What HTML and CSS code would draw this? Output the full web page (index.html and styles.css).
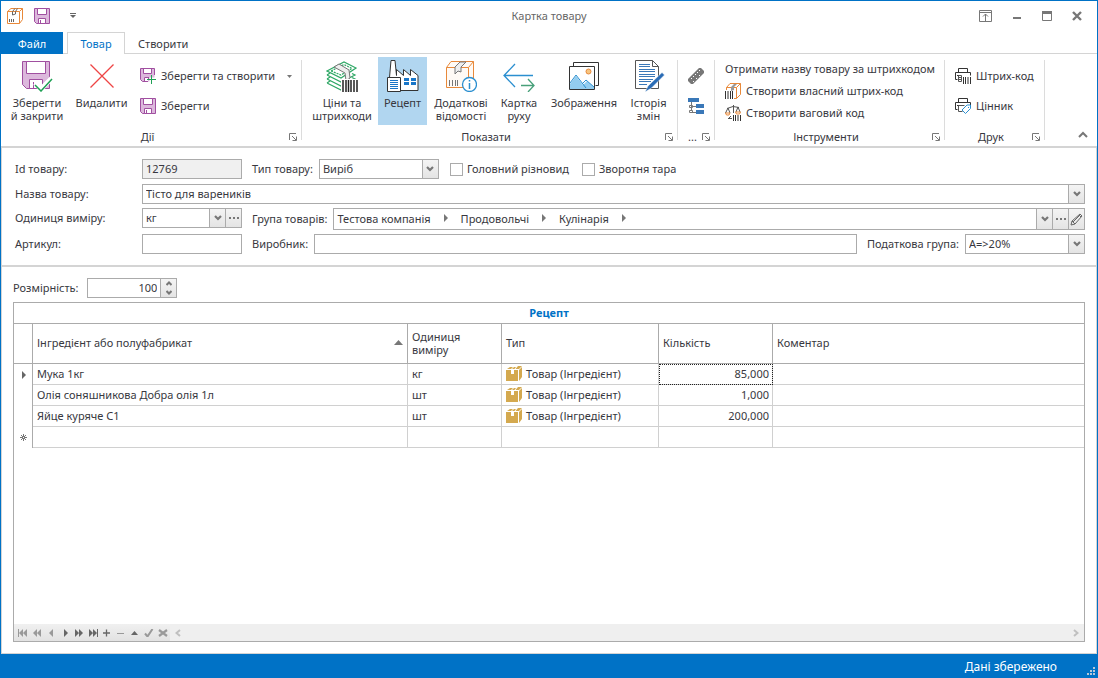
FILE: index.html
```html
<!DOCTYPE html>
<html lang="uk">
<head>
<meta charset="utf-8">
<title>Картка товару</title>
<link rel="stylesheet" href="styles.css">
</head>
<body>
<svg class="defs" aria-hidden="true">
  <symbol id="save" viewBox="0 0 16 16"><path d="M.5.5h15v15h-13l-2-2z" fill="#dcb8dc" stroke="#a04fa0"/><path d="M3.5.5h9v6h-9z" fill="#fff" stroke="#a04fa0"/><path d="M4.500 15.500v-5h7v5z" fill="#fff" stroke="#a04fa0"/><path d="M6.500 12v3" stroke="#a04fa0"/></symbol>
  <symbol id="chev" viewBox="0 0 8 6"><path d="M1 1l3 3 3-3" fill="none" stroke="#777" stroke-width="2.200"/></symbol>
  <symbol id="launch" viewBox="0 0 8 8"><path d="M.5 7V.5H7M3 3l4 4M7.500 3.500v4h-4" fill="none" stroke="#777"/></symbol>
  <symbol id="right" viewBox="0 0 4 8"><path d="M0 0l4 4-4 4z" fill="currentColor"/></symbol>
  <symbol id="goods" viewBox="0 -1 16 16"><path d="M0 4h12v11H0zM1 3l3-2h3L5 3zM6 3l2-2h2L8.500 3zM9.500 3L12 0h4l-3 3zM13 4l3-3v10l-3 4z" fill="#d4a94f"/><path d="M5 4h3v4H5z" fill="#fff"/></symbol>
  <symbol id="printer" viewBox="0 0 16 16"><path d="M3.500 5V.5h9V5M2.500 11.500h-2v-7h15v3M2 7.500h3" fill="none" stroke="#333"/></symbol>
</svg>
<div class="window">
  <header class="titlebar">
    <div class="quick">
      <svg class="i16" viewBox="0 0 16 16"><path d="M.5 3.500L4 .5h11.500v11l-3 4H.5zM.5 3.500h12v12M12.500 3.500l3-3" fill="none" stroke="#e8893a"/><path d="M5.500 7V3.500L8 .5M8.500 6V3.500L10.500.5M5.500 7l3-1M2.500 11v3M4.500 11v3M6.500 11v3" fill="none" stroke="#666"/></svg>
      <button class="plain" aria-label="Зберегти"><svg class="i16"><use href="#save"/></svg></button>
      <button class="plain more" aria-label="Налаштувати"><svg width="6" height="6" viewBox="0 0 6 6"><path d="M0 .5h6" stroke="#666"/><path d="M0 2h6L3 5z" fill="#666"/></svg></button>
    </div>
    <h1>Картка товару</h1>
    <div class="wincontrols">
      <button class="plain" aria-label="Стрічка"><svg width="13" height="12" viewBox="0 0 13 12"><path d="M.5.5h12v11H.5zM0 2.500h13M6.500 4v8M4 6.500L6.500 4 9 6.500" fill="none" stroke="#777"/></svg></button>
      <button class="plain" aria-label="Згорнути"><svg width="10" height="12" viewBox="0 0 10 12"><path d="M1 8h8" stroke="#777" stroke-width="2"/></svg></button>
      <button class="plain" aria-label="Розгорнути"><svg width="10" height="10" viewBox="0 0 10 10"><path d="M.5.5h9v9h-9z" fill="none" stroke="#777"/><path d="M0 0h10v3H0z" fill="#777"/></svg></button>
      <button class="plain" aria-label="Закрити"><svg width="10" height="10" viewBox="0 0 10 10"><path d="M1 1l8 8M9 1L1 9" stroke="#777" stroke-width="2.400"/></svg></button>
    </div>
  </header>
  <nav class="tabs">
    <button class="tab file">Файл</button>
    <button class="tab active">Товар</button>
    <button class="tab">Створити</button>
  </nav>
  <div class="ribbon">
    <section class="group actions">
      <div class="tools">
        <button class="big saveclose"><svg class="i32" viewBox="0 0 32 32"><path d="M1.500 1.500h27v27h-23l-4-4z" fill="#dcb8dc" stroke="#a04fa0"/><path d="M5.500 1.500h19v12h-19z" fill="#fff" stroke="#a04fa0"/><path d="M8.500 28.500v-9h13v9z" fill="#fff" stroke="#a04fa0"/><path d="M12.500 22v6" stroke="#a04fa0"/><path d="M14 23l6 6L31 18" fill="none" stroke="#fff" stroke-width="5"/><path d="M14 25l6 6L31 19" fill="none" stroke="#1fa055" stroke-width="1.500"/></svg><span>Зберегти<br>й закрити</span></button>
        <button class="big delete"><svg class="i32" viewBox="0 0 32 32"><path d="M4.500 4.500l23 23M27.500 4.500l-23 23" stroke="#ee4545" stroke-width="1.300"/></svg><span>Видалити</span></button>
        <div class="stack two">
          <button class="small"><svg class="i16" viewBox="0 0 16 16"><path d="M.5.5h14v9h-5v4h-7l-2-2z" fill="#dcb8dc"/><path d="M14.500 7V.5H.5v11l2 2H8M3.500.5v5h8v-5" fill="none" stroke="#a04fa0"/><path d="M4 1h7v4H4zM4 9h4v4H4z" fill="#fff"/><path d="M4.500 13V9.500H8M8.500 9v2" fill="none" stroke="#a04fa0"/><path d="M11.500 7v9M7 11.500h9" stroke="#1fa055"/></svg><span>Зберегти та створити</span><svg class="drop" width="5" height="3" viewBox="0 0 5 3"><path d="M0 0h5L2.500 3z" fill="#777"/></svg></button>
          <button class="small"><svg class="i16"><use href="#save"/></svg><span>Зберегти</span></button>
        </div>
      </div>
      <footer><span>Дії</span><button class="plain launch" aria-label="Дії: більше"><svg width="8" height="8"><use href="#launch"/></svg></button></footer>
    </section>
    <section class="group show">
      <div class="tools">
        <button class="big prices"><svg class="i32" viewBox="0 0 32 32"><g fill="#fff" stroke="#2fa866" stroke-width="1.200"><path d="M1 23l3-2M1 23l14 7 3-2M1 19l3-2M1 19l14 7 14-7-3-1.500M1 15l3-2M1 15l14 7 14-7-3-1.500"/><path d="M1 11l17-9 12 6-15 10z"/><path d="M5 11l13-6.500 8 4-11 6.500z" stroke-dasharray="2 1"/></g><path d="M8 7l5-3 10 6 1 8-4 3-1-8z" fill="#eee" stroke="#777"/><path d="M15 19h17v13H15z" fill="#fff"/><path d="M17 20v12M20 20v12M22.500 20v12M25 20v12M28 20v12M31 20v12" stroke="#222" stroke-width="1.500"/></svg><span>Ціни та<br>штрихкоди</span></button>
        <button class="big recipe selected"><svg class="i32" viewBox="0 0 32 32"><path d="M2.500 17.500L4 .5h4l1.500 15V9.500l7 6v-6l7 6v-6l7.500 6v15H2.500z" fill="#fff" stroke="#333"/><path d="M.5 17.500h13v14H.5z" fill="#fff" stroke="#333"/><path d="M3 20.500h8M3 22.500h8M3 24.500h8M3 26.500h8M3 28.500h8" stroke="#1976c8"/><path d="M17 18h5v3h-5zM24 18h5v3h-5zM17 22h5v3h-5zM24 22h5v3h-5z" fill="#1976c8"/></svg><span>Рецепт</span></button>
        <button class="big details"><svg class="i32" viewBox="0 0 32 32"><path d="M1.500 7.500L6 1.500h22.500v26h-27zM1.500 7.500h22v20M23.500 7.500l5-6" fill="#fffaf5" stroke="#e8893a"/><path d="M10 14V7l5-5h6l-5 5v5l-3-1z" fill="#eee" stroke="#777"/><path d="M4.500 20v6M7.500 20v6M10.500 20v6M12.500 20v6" stroke="#777"/><circle cx="24.500" cy="24.500" r="7" fill="#fff" stroke="#2b8fd0" stroke-width="1.300"/><path d="M24.500 23v6M24.500 20v1.500" stroke="#2b8fd0" stroke-width="1.500"/></svg><span>Додаткові<br>відомості</span></button>
        <button class="big moves"><svg class="i32" viewBox="0 0 32 32"><path d="M12 4L1 15.500 12 27M1 15.500h29" fill="none" stroke="#2b8fd0" stroke-width="1.300"/><path d="M18 25.500h13M25 19l6 6.500-6 6.500" fill="none" stroke="#48a07a" stroke-width="1.300"/></svg><span>Картка<br>руху</span></button>
        <button class="big images"><svg class="i32" viewBox="0 0 32 32"><path d="M5.500 6V2.500h25v23h-3" fill="none" stroke="#333"/><path d="M1.500 6.500h25v23h-25z" fill="#fff" stroke="#333"/><path d="M2 24l6-8 7 9 4-4 7 6v2H2z" fill="#93cdf0"/><path d="M2 23l6-8 10 13M14 24l4-4 8 7" fill="none" stroke="#2b8fd0"/><circle cx="20.500" cy="11.500" r="2.500" fill="#f6c580" stroke="#e8893a"/></svg><span>Зображення</span></button>
        <button class="big history"><svg class="i32" viewBox="0 0 32 32"><path d="M2.500.5h17l6 6v22h-23zM19.500.5v6h6" fill="#fff" stroke="#555"/><path d="M6 4.500h11M6 6.500h11M6 9.500h16M6 11.500h16M6 14.500h16M6 16.500h16M6 19.500h14M6 21.500h12M6 24.500h8" stroke="#3a78b8"/><path d="M12 32l3-6L29 12.500l2.500 2.500-13 13z" fill="#2a6cb5" stroke="#fff" stroke-width=".5"/></svg><span>Історія<br>змін</span></button>
      </div>
      <footer><span>Показати</span><button class="plain launch" aria-label="Показати: більше"><svg width="8" height="8"><use href="#launch"/></svg></button></footer>
    </section>
    <section class="group extra">
      <div class="tools stack two">
        <button class="small" aria-label="Лінійка"><svg class="i16" viewBox="0 0 16 16"><path d="M0 11L11 0h2l3 3v2L5 16H3l-3-3z" fill="#777"/><path d="M3 10l1 1M5 8l1 1M7 6l1 1M9 4l1 1M11 2l1 1M5 13l1 1M8 10l1 1M11 7l1 1" stroke="#fff"/></svg></button>
        <button class="small" aria-label="Структура"><svg class="i16" viewBox="0 0 16 16"><path d="M0 0h11v4H0zM8 6h8v4H8zM8 12h8v4H8z" fill="#3a78b8"/><path d="M3.500 4v9M4 8.500h4M4 14.500h4M1.500 7.500h3v2h-3zM1.500 12.500h3v2h-3z" fill="#fff" stroke="#777"/></svg></button>
      </div>
      <footer><span>...</span><button class="plain launch" aria-label="Інше: більше"><svg width="8" height="8"><use href="#launch"/></svg></button></footer>
    </section>
    <section class="group instruments">
      <div class="tools stack three">
        <button class="small"><span>Отримати назву товару за штрихкодом</span></button>
        <button class="small"><svg class="i16" viewBox="0 0 16 16"><path d="M1.500 7V4.500L5 .5h10.500v11l-4 4H9M1.500 4.500h10v11M11.500 4.500l4-4" fill="none" stroke="#e8893a"/><path d="M6 8V4l3-3h3L9 4v3z" fill="#999"/><path d="M.5 8v8M3 8v8M5.500 8v8M7.500 8v8" stroke="#333"/></svg><span>Створити власний штрих-код</span></button>
        <button class="small"><svg class="i16" viewBox="0 0 16 16"><path d="M8.500 0v8M2 3.500l6-2 6 1M3 3L.5 8M3 3l2 5M13 2l-2 5M13 2l2 5M3 13.500h4M6 11l-2 2" fill="none" stroke="#555"/><path d="M.5 8h4.500l-1 2H1.500zM10.500 7h5l-1 2h-3z" fill="#fff" stroke="#e8893a"/><path d="M8.500 10v6M10.500 10v6M13 10v6M15.500 10v6" stroke="#333"/></svg><span>Створити ваговий код</span></button>
      </div>
      <footer><span>Інструменти</span><button class="plain launch" aria-label="Інструменти: більше"><svg width="8" height="8"><use href="#launch"/></svg></button></footer>
    </section>
    <section class="group print">
      <div class="tools stack two">
        <button class="small"><svg class="i16" viewBox="0 0 16 16"><use href="#printer"/><path d="M3.500 7.500h3v6h-3zM4 9.500h2M4 11.500h2" fill="none" stroke="#555"/><path d="M8.500 9v7M10.500 9v7M13 9v7M15.500 9v7" stroke="#333"/></svg><span>Штрих-код</span></button>
        <button class="small"><svg class="i16" viewBox="0 0 16 16"><use href="#printer"/><path d="M3.500 7.500h6M3.500 7.500v6h4" fill="none" stroke="#555"/><path d="M7 12l5-5h3.500v3.500l-5 5z" fill="#fff" stroke="#2b8fd0"/><path d="M13 9h1v1h-1z" fill="#2b8fd0"/></svg><span>Цінник</span></button>
      </div>
      <footer><span>Друк</span><button class="plain launch" aria-label="Друк: більше"><svg width="8" height="8"><use href="#launch"/></svg></button></footer>
    </section>
    <button class="plain collapse" aria-label="Згорнути стрічку"><svg width="10" height="7" viewBox="0 0 10 7"><path d="M1 6l4-4 4 4" fill="none" stroke="#777" stroke-width="2"/></svg></button>
  </div>
  <main>
    <form class="card">
      <div class="row">
        <label class="first" for="id">Id товару:</label>
        <input class="box w100 readonly" id="id" value="12769" readonly>
        <label for="type">Тип товару:</label>
        <div class="box combo w120"><select id="type"><option>Виріб</option></select><span class="btn"><svg width="8" height="6"><use href="#chev"/></svg></span></div>
        <label class="check"><input type="checkbox">Головний різновид</label>
        <label class="check"><input type="checkbox">Зворотня тара</label>
      </div>
      <div class="row">
        <label class="first" for="name">Назва товару:</label>
        <div class="box combo grow"><select id="name"><option>Тісто для вареників</option></select><span class="btn"><svg width="8" height="6"><use href="#chev"/></svg></span></div>
      </div>
      <div class="row">
        <label class="first" for="unit">Одиниця виміру:</label>
        <div class="box combo w100"><select id="unit"><option>кг</option></select><span class="btn"><svg width="8" height="6"><use href="#chev"/></svg></span><button type="button" class="btn" aria-label="Вибрати одиницю"><svg width="10" height="2" viewBox="0 0 10 2"><path d="M0 0h2v2H0zM4 0h2v2H4zM8 0h2v2H8z" fill="#777"/></svg></button></div>
        <span class="label">Група товарів:</span>
        <div class="box combo grow tall">
          <div class="crumbs">
            <button type="button" class="plain">Тестова компанія</button><svg width="4" height="8"><use href="#right"/></svg>
            <button type="button" class="plain">Продовольчі</button><svg width="4" height="8"><use href="#right"/></svg>
            <button type="button" class="plain">Кулінарія</button><svg width="4" height="8"><use href="#right"/></svg>
          </div>
          <button type="button" class="btn" aria-label="Відкрити список груп"><svg width="8" height="6"><use href="#chev"/></svg></button>
          <button type="button" class="btn" aria-label="Вибрати групу"><svg width="10" height="2" viewBox="0 0 10 2"><path d="M0 0h2v2H0zM4 0h2v2H4zM8 0h2v2H8z" fill="#777"/></svg></button>
          <button type="button" class="btn" aria-label="Редагувати групу"><svg width="13" height="13" viewBox="0 0 13 13"><path d="M1 12l1-4 8-7 2 2-7 8zM3 9l6-6M2 8l3 3M9 2l2 2" fill="none" stroke="#666"/></svg></button>
        </div>
      </div>
      <div class="row">
        <label class="first" for="sku">Артикул:</label>
        <input class="box w100" id="sku">
        <label for="maker">Виробник:</label>
        <input class="box grow" id="maker">
        <label for="tax">Податкова група:</label>
        <div class="box combo w120"><select id="tax"><option>А=&gt;20%</option></select><span class="btn"><svg width="8" height="6"><use href="#chev"/></svg></span></div>
      </div>
    </form>
    <section class="recipe-pane">
      <div class="size">
        <label for="size">Розмірність:</label>
        <div class="box combo spin"><input id="size" value="100"><span class="updown"><button class="plain" aria-label="Більше"><svg width="6" height="5" viewBox="0 0 6 5"><path d="M.5 4L3 1.500 5.500 4" fill="none" stroke="#777" stroke-width="2"/></svg></button><button class="plain" aria-label="Менше"><svg width="6" height="5" viewBox="0 0 6 5"><path d="M.5 1L3 3.500 5.500 1" fill="none" stroke="#777" stroke-width="2"/></svg></button></span></div>
      </div>
      <div class="grid">
        <table>
          <caption>Рецепт</caption>
          <colgroup><col class="c-mark"><col class="c-name"><col class="c-unit"><col class="c-type"><col class="c-qty"><col></colgroup>
          <thead>
            <tr><th></th><th><div class="sorted">Інгредієнт або полуфабрикат<svg width="9" height="5" viewBox="0 0 9 5"><path d="M0 5h9L4.500 0z" fill="#777"/></svg></div></th><th>Одиниця виміру</th><th>Тип</th><th>Кількість</th><th>Коментар</th></tr>
          </thead>
          <tbody>
            <tr><td><svg width="4" height="8"><use href="#right"/></svg></td><td>Мука 1кг</td><td>кг</td><td><div class="goods"><svg class="i16"><use href="#goods"/></svg>Товар (Інгредієнт)</div></td><td class="num focus">85,000</td><td></td></tr>
            <tr><td></td><td>Олія соняшникова Добра олія 1л</td><td>шт</td><td><div class="goods"><svg class="i16"><use href="#goods"/></svg>Товар (Інгредієнт)</div></td><td class="num">1,000</td><td></td></tr>
            <tr><td></td><td>Яйце куряче С1</td><td>шт</td><td><div class="goods"><svg class="i16"><use href="#goods"/></svg>Товар (Інгредієнт)</div></td><td class="num">200,000</td><td></td></tr>
            <tr><td><svg width="7" height="7" viewBox="0 0 7 7"><path d="M3.500 0v7M0 3.500h7M1 1l5 5M6 1L1 6" stroke="#777"/><path d="M3 3h1v1H3z" fill="#fff"/></svg></td><td></td><td></td><td></td><td></td><td></td></tr>
          </tbody>
        </table>
        <div class="navigator">
          <div class="navbuttons">
            <button class="plain dim" aria-label="Перший"><svg viewBox="0 0 10 8"><path d="M.5 0v8" stroke="currentColor"/><path d="M5 0v8L1 4zM9 0v8L5 4z" fill="currentColor"/></svg></button>
            <button class="plain dim" aria-label="Попередня сторінка"><svg viewBox="0 0 10 8"><path d="M5 0v8L1 4zM9 0v8L5 4z" fill="currentColor"/></svg></button>
            <button class="plain dim" aria-label="Попередній"><svg viewBox="0 0 10 8"><path d="M7 0v8L3 4z" fill="currentColor"/></svg></button>
            <button class="plain" aria-label="Наступний"><svg viewBox="0 0 10 8"><path d="M4 0v8l4-4z" fill="currentColor"/></svg></button>
            <button class="plain" aria-label="Наступна сторінка"><svg viewBox="0 0 10 8"><path d="M1 0v8l4-4zM5 0v8l4-4z" fill="currentColor"/></svg></button>
            <button class="plain" aria-label="Останній"><svg viewBox="0 0 10 8"><path d="M9.500 0v8" stroke="currentColor"/><path d="M1 0v8l4-4zM5 0v8l4-4z" fill="currentColor"/></svg></button>
            <button class="plain" aria-label="Додати"><svg viewBox="0 0 10 8"><path d="M4.500 .5v7M1 4h7" stroke="currentColor" stroke-width="1.300"/></svg></button>
            <button class="plain dim" aria-label="Видалити рядок"><svg viewBox="0 0 10 8"><path d="M1 4.500h7" stroke="currentColor"/></svg></button>
            <button class="plain" aria-label="Редагувати"><svg viewBox="0 0 10 8"><path d="M1 6h7L4.500 2z" fill="currentColor"/></svg></button>
            <button class="plain dim" aria-label="Застосувати"><svg viewBox="0 0 10 8"><path d="M1 4.500l2.500 3L8.500 0" fill="none" stroke="currentColor" stroke-width="2"/></svg></button>
            <button class="plain dim" aria-label="Скасувати"><svg viewBox="0 0 10 8"><path d="M1 1l8 6M9 1l-8 6" stroke="currentColor" stroke-width="2.200"/></svg></button>
          </div>
          <div class="scroll"><svg width="6" height="8" viewBox="0 0 6 8"><path d="M5 1L1.500 4 5 7" fill="none" stroke="#c0c0c0" stroke-width="2"/></svg><svg width="6" height="8" viewBox="0 0 6 8"><path d="M1 1l3.500 3L1 7" fill="none" stroke="#c0c0c0" stroke-width="2"/></svg></div>
        </div>
      </div>
    </section>
  </main>
  <footer class="status"><span>Дані збережено</span><svg class="grip" width="8" height="8" viewBox="0 0 8 8"><path d="M6 0h2v2H6zM3 3h2v2H3zM6 3h2v2H6zM0 6h2v2H0zM3 6h2v2H3zM6 6h2v2H6z" fill="#b8c8d8"/></svg></footer>
</div>
</body>
</html>
```
FILE: styles.css
```css
* { box-sizing: border-box; }
body { margin: 0; background: #fff; }
body, button, input, select { font: 11px/13px "Noto Sans", "Open Sans", sans-serif; color: #383840; }
button { cursor: pointer; }
svg { display: block; flex: none; }
.defs { display: none; }
.i16 { width: 16px; height: 16px; }
.i32 { width: 32px; height: 32px; }
.plain { border: 0; padding: 0; background: none; }

.window { display: flex; flex-direction: column; min-height: 100vh; border: 1px solid #0072c6; border-bottom: 0; }

.titlebar { display: grid; grid-template-columns: 1fr auto 1fr; align-items: center; height: 31px; padding-bottom: 1px; }
.titlebar h1 { margin: 0; padding-bottom: 1px; font-size: 11px; font-weight: 400; color: #666; }
.quick { display: flex; align-items: center; gap: 11px; padding-left: 6px; }
.quick .more { margin-left: 9px; }
.wincontrols { display: flex; align-items: center; justify-content: flex-end; gap: 20px; padding-right: 15px; }

.tabs { display: flex; height: 22px; background: linear-gradient(#d4d4d4, #d4d4d4) bottom / 100% 1px no-repeat; }
.tab { border: 0; background: none; padding: 0 13px; }
.tab.file { width: 62px; background: #0072c6; color: #fff; margin-right: 4px; }
.tab.active { width: 58px; padding: 0; background: #fff; border: 1px solid #d4d4d4; border-bottom: 0; color: #0072c6; }

.ribbon { display: flex; height: 94px; border-bottom: 2px solid #d4d4d4; padding-bottom: 1px; }
.group { position: relative; display: flex; flex-direction: column; justify-content: space-between; padding-top: 3px; }
.group::after { content: ""; position: absolute; right: 0; top: 6px; bottom: 5px; width: 1px; background: #dcdcdc; }
.actions { width: 301px; }
.show { width: 376px; }
.extra { width: 37px; }
.instruments { width: 230px; }
.print { width: 100px; }
.tools { display: flex; padding: 0 5px; }
.actions .tools { padding-left: 3px; }
.group footer { display: flex; align-items: center; justify-content: center; height: 16px; position: relative; padding-right: 8px; }
.group footer span { line-height: 16px; }
.launch { position: absolute; right: 5px; top: 4px; }
.big { display: flex; flex-direction: column; align-items: center; gap: 4px; height: 68px; padding: 3px 0 0; border: 0; background: none; white-space: nowrap; }
.big.selected { background: #b1d6f0; }
.saveclose { width: 66px; }
.delete { width: 63px; }
.prices { width: 70px; margin-right: 1px; }
.recipe { width: 49px; }
.details { width: 68px; margin-right: 1px; }
.moves { width: 46px; }
.images { width: 84px; }
.history { width: 45px; }
.small { display: flex; align-items: center; gap: 5px; height: 22px; padding: 0; border: 0; background: none; white-space: nowrap; }
.small span { padding-bottom: 2px; }
.drop { margin-left: 7px; }
.stack { display: flex; flex-direction: column; }
.two { gap: 8px; padding-top: 8px; }
.actions .two { margin-left: 7px; }
.extra .two, .instruments .three, .print .two { padding-left: 10px; }
.three { padding-top: 1px; }
.collapse { margin: auto 9px 7px auto; }

main { flex: 1; display: flex; flex-direction: column; border: 1px solid #d4d4d4; border-top: 0; }
.card { display: flex; flex-direction: column; gap: 4px; padding: 11px 11px 11px 13px; border-bottom: 2px solid #d4d4d4; }
.row { display: flex; align-items: flex-start; min-height: 20px; }
.row:first-child { min-height: 21px; }
.row > label, .row > .label { line-height: 20px; margin: 0 6px 0 10px; white-space: nowrap; }
.row > .label { line-height: 22px; }
.row > label.first { width: 127px; margin: 0; }
.box { height: 20px; border: 1px solid #ababab; background: #fff; padding: 0 3px 2px; border-radius: 0; min-width: 0; }
.readonly { background: #f0f0f0; }
.w100 { width: 100px; }
.w120 { width: 120px; }
.grow { flex: 1; }
.tall { height: 22px; }
.combo { display: flex; padding: 0; }
.combo select { flex: 1; min-width: 0; appearance: none; border: 0; padding: 0 3px 2px; background: none; }
.combo input { flex: 1; min-width: 0; border: 0; padding: 0 3px 2px; background: none; text-align: right; }
.btn { display: flex; align-items: center; justify-content: center; flex: none; width: 16px; padding: 0; border: 0; border-left: 1px solid #ababab; background: linear-gradient(#f4f4f4, #e4e4e4); pointer-events: none; }
button.btn { pointer-events: auto; }
.row > .check { display: flex; align-items: center; gap: 4px; margin: 0 2px 0 11px; }
.check input { appearance: none; width: 13px; height: 13px; margin: 0; border: 1px solid #ababab; background: #fff; }
.crumbs { flex: 1; display: flex; align-items: center; gap: 13px; padding: 0 0 2px 3px; color: #777; }

.recipe-pane { flex: 1; display: flex; flex-direction: column; padding: 11px; gap: 4px; }
.size { display: flex; align-items: center; gap: 9px; }
.size label { padding-bottom: 1px; }
.spin { width: 90px; }
.updown { display: flex; flex-direction: column; width: 16px; border-left: 1px solid #ababab; background: linear-gradient(#f4f4f4, #e4e4e4); }
.updown button { flex: 1; display: flex; align-items: center; justify-content: center; }
.grid { flex: 1; display: flex; flex-direction: column; border: 1px solid #ababab; }
table { width: 100%; table-layout: fixed; border-collapse: separate; border-spacing: 0; }
caption { height: 21px; line-height: 20px; border-bottom: 1px solid #ababab; font-weight: 700; color: #0072c6; }
.c-mark { width: 19px; }
.c-name { width: 375px; }
.c-unit { width: 94px; }
.c-type { width: 157px; }
.c-qty { width: 114px; }
th { height: 40px; padding: 0 4px 2px; font-weight: 400; text-align: left; border-right: 1px solid #ababab; border-bottom: 1px solid #ababab; }
td { height: 21px; padding: 0 4px 2px; border-right: 1px solid #d0d0d0; border-bottom: 1px solid #d0d0d0; white-space: nowrap; }
th:last-child, td:last-child { border-right: 0; }
td:first-child { border-right-color: #ababab; border-bottom: 0; padding: 0 5px 0 6px; color: #666; }
td:first-child svg { margin: auto; }
.sorted, .goods { display: flex; align-items: center; }
.sorted { justify-content: space-between; }
.goods { gap: 4px; }
.num { text-align: right; padding-right: 3px; }
.focus { outline: 1px dotted #222; outline-offset: -1px; }
.navigator { display: flex; height: 17px; margin-top: auto; background: linear-gradient(#f0f0f0, #e2e2e2); }
.navbuttons { display: flex; align-items: center; gap: 4px; padding: 0 2px 0 4px; color: #666; }
.navbuttons button { color: #666; }
.navbuttons .dim { color: #999; }
.navbuttons svg { width: 10px; height: 8px; }
.scroll { flex: 1; display: flex; align-items: center; justify-content: space-between; padding: 0 5px; background: #efefef; }

.status { display: flex; align-items: center; justify-content: flex-end; height: 24px; padding-right: 40px; position: relative; background: #0072c6; color: #fff; }
.status span { font-size: 12px; }
.grip { position: absolute; right: 2px; bottom: 3px; }
```
